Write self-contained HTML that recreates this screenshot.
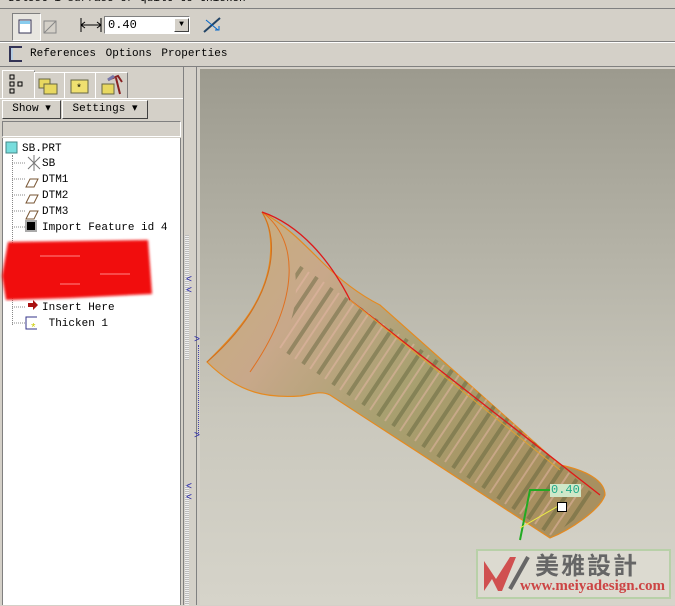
<!DOCTYPE html>
<html><head><meta charset="utf-8">
<style>
body{margin:0;width:675px;height:605px;overflow:hidden;background:#d4d0c8;font-family:"Liberation Mono","Noto Sans CJK SC",monospace;font-size:11px;color:#000;position:relative}
.a{position:absolute}
.btn{background:#d4d0c8;border:1px solid;border-color:#fff #404040 #404040 #fff;box-sizing:border-box;text-align:center;line-height:16px}
.tree div{position:absolute;left:42px;white-space:nowrap}
</style></head><body>
<div class="a" style="left:0;top:0;width:675px;height:8px;background:#d4d0c8;overflow:hidden"><div style="margin-top:-7px;margin-left:8px;font-size:11px;color:#000">Select 1 surface or quilt to thicken</div></div>
<div class="a" style="left:0;top:8px;width:675px;height:1px;background:#808080"></div>
<div class="a" style="left:12px;top:13px;width:27px;height:26px;border:1px solid;border-color:#808080 #fff #fff #808080;background:#e8e6e0"></div>
<svg class="a" style="left:17px;top:18px" width="40" height="18"><rect x="2" y="2" width="12" height="13" fill="#fff" stroke="#335" /><rect x="3" y="3" width="10" height="3" fill="#8ce"/><path d="M27 15 L39 3 M27 15 V3 H39 V15 Z" stroke="#888" fill="none"/></svg>
<svg class="a" style="left:80px;top:17px" width="22" height="16"><path d="M1 1V15M21 1V15M1 8H21M1 8l4-3M1 8l4 3M21 8l-4-3M21 8l-4 3" stroke="#000" fill="none"/></svg>
<div class="a" style="left:104px;top:16px;width:86px;height:18px;background:#fff;border:1px solid;border-color:#808080 #fff #fff #808080;box-sizing:border-box;font-size:12px;line-height:16px;padding-left:3px">0.40</div>
<div class="a btn" style="left:174px;top:18px;width:15px;height:14px;font-size:8px;line-height:12px">▼</div>
<svg class="a" style="left:202px;top:16px" width="20" height="18"><path d="M2 16L18 2" stroke="#246" stroke-width="2"/><path d="M4 4L16 14M13 14h4v-4" stroke="#06c" fill="none"/></svg>
<div class="a" style="left:0;top:41px;width:675px;height:1px;background:#808080"></div>
<div class="a" style="left:0;top:42px;width:675px;height:1px;background:#fff"></div>
<svg class="a" style="left:7px;top:45px" width="18" height="18"><path d="M15 2H3V16H15" stroke="#335" stroke-width="2" fill="none"/><path d="M5 3V15" stroke="#9cf"/></svg>
<div class="a" style="left:30px;top:48px;font-size:11px;word-spacing:3px">References  Options  Properties</div>
<div class="a" style="left:0;top:66px;width:675px;height:1px;background:#808080"></div>
<div class="a" style="left:2px;top:70px;width:31px;height:30px;background:#d4d0c8;border:1px solid;border-color:#fff #808080 transparent #fff"></div>
<svg class="a" style="left:8px;top:74px" width="18" height="20"><rect x="2" y="1" width="4" height="4" fill="none" stroke="#000"/><rect x="2" y="8" width="4" height="4" fill="none" stroke="#000"/><rect x="2" y="15" width="4" height="4" fill="none" stroke="#000"/><rect x="10" y="8" width="4" height="4" fill="none" stroke="#000"/></svg>
<div class="a" style="left:34px;top:72px;width:29px;height:26px;border:1px solid;border-color:#fff #808080 transparent #fff"></div>
<svg class="a" style="left:38px;top:76px" width="22" height="20"><rect x="1" y="3" width="11" height="9" fill="#e8d860" stroke="#664"/><rect x="6" y="8" width="13" height="10" fill="#e8d860" stroke="#664"/></svg>
<div class="a" style="left:64px;top:72px;width:30px;height:26px;border:1px solid;border-color:#fff #808080 transparent #fff"></div>
<svg class="a" style="left:70px;top:77px" width="20" height="17"><rect x="1" y="3" width="17" height="13" fill="#f0e070" stroke="#664"/><text x="6" y="14" font-size="10">*</text></svg>
<div class="a" style="left:95px;top:72px;width:31px;height:26px;border:1px solid;border-color:#fff #808080 transparent #fff"></div>
<svg class="a" style="left:100px;top:74px" width="24" height="22"><rect x="2" y="10" width="12" height="10" fill="#e8d860" stroke="#664"/><path d="M8 6L18 2L22 8M16 4L20 20" stroke="#822" stroke-width="2" fill="none"/><path d="M8 6l6-4" stroke="#77a" stroke-width="3"/></svg>
<div class="a" style="left:0;top:98px;width:183px;height:507px;background:#d4d0c8;border-top:1px solid #fff"></div>
<div class="a btn" style="left:2px;top:100px;width:59px;height:19px;font-size:11px">Show ▾</div>
<div class="a btn" style="left:62px;top:100px;width:86px;height:19px;font-size:11px">Settings ▾</div>
<div class="a" style="left:2px;top:121px;width:179px;height:16px;border:1px solid;border-color:#808080 #fff #fff #808080;background:#d4d0c8;box-sizing:border-box"></div>
<div class="a" style="left:2px;top:138px;width:179px;height:467px;background:#fff;border-left:1px solid #808080;border-right:1px solid #808080;box-sizing:border-box"></div>
<div class="a" style="left:12px;top:155px;height:170px;border-left:1px dotted #888"></div>
<svg class="a" style="left:5px;top:141px" width="14" height="14"><rect x="1" y="1" width="11" height="11" fill="#7dd" stroke="#488"/></svg>
<div class="a" style="left:22px;top:143px">SB.PRT</div>
<div class="tree" style="position:absolute;left:0;top:0">
<div style="top:158px">SB</div><div style="top:174px">DTM1</div><div style="top:190px">DTM2</div><div style="top:206px">DTM3</div><div style="top:222px">Import Feature id 4</div><div style="top:302px">Insert Here</div><div style="top:318px;left:42px">&nbsp;Thicken 1</div>
</div>
<svg class="a" style="left:12px;top:150px" width="30" height="180">
<g stroke="#888" stroke-dasharray="1 1"><path d="M0 13H14M0 29H14M0 45H14M0 61H14M0 77H14M0 157H14M0 173H14"/></g>
<path d="M16 7L28 19M16 19L28 7M22 5V21" stroke="#777"/>
<g fill="none" stroke="#753"><path d="M16 34h8l-4 8h-8z" transform="translate(2 -5)"/><path d="M16 50h8l-4 8h-8z" transform="translate(2 -5)"/><path d="M16 66h8l-4 8h-8z" transform="translate(2 -5)"/></g>
<rect x="13" y="70" width="12" height="12" fill="#aaa"/><rect x="15" y="72" width="8" height="8" fill="#000"/>
<path d="M16 153h5v-3l5 5-5 5v-3h-5z" fill="#a11"/>
<path d="M25 167H14V179H25" stroke="#338" fill="none"/>
</svg>
<svg class="a" style="left:30px;top:322px" width="10" height="10"><text x="0" y="9" font-size="11" fill="#cc0">*</text></svg>
<svg class="a" style="left:0;top:236px" width="160" height="66"><defs><filter id="b"><feGaussianBlur stdDeviation="1.2"/></filter></defs><path d="M8 6 L148 4 L150 30 L152 58 L70 62 L6 64 L2 40 Z" fill="#f10a0a" filter="url(#b)"/><path d="M40 20h40M100 38h30M60 48h20" stroke="#f88" stroke-width="1"/></svg>
<div class="a" style="left:183px;top:67px;width:17px;height:538px;background:#d4d0c8;border-left:1px solid #808080"></div>
<div class="a" style="left:185px;top:235px;width:4px;height:125px;background:repeating-linear-gradient(#bbb 0 1px,#eee 1px 2px)"></div>
<div class="a" style="left:185px;top:485px;width:4px;height:120px;background:repeating-linear-gradient(#bbb 0 1px,#eee 1px 2px)"></div>
<div class="a" style="left:196px;top:67px;width:1px;height:538px;background:#808080"></div>
<div class="a" style="left:186px;top:275px;color:#22a;font-size:10px;line-height:11px">&lt;<br>&lt;</div>
<div class="a" style="left:186px;top:482px;color:#22a;font-size:10px;line-height:11px">&lt;<br>&lt;</div>
<div class="a" style="left:194px;top:335px;color:#22a;font-size:10px">&gt;</div>
<div class="a" style="left:194px;top:431px;color:#22a;font-size:10px">&gt;</div>
<div class="a" style="left:198px;top:345px;height:90px;border-left:1px dotted #44a"></div>
<div class="a" style="left:200px;top:69px;width:475px;height:536px;background:linear-gradient(#9c9a8e,#b5b3a7 35%,#cac8bd 65%,#d6d4ca)"></div>
<svg class="a" style="left:200px;top:69px" width="475" height="536">
<defs>
<linearGradient id="g" x1="0" y1="0" x2="1" y2="0.6"><stop offset="0" stop-color="#c8b07a"/><stop offset=".3" stop-color="#c8a88a"/><stop offset=".6" stop-color="#a8a070"/><stop offset="1" stop-color="#a89060"/></linearGradient>
<clipPath id="c"><path transform="translate(-200 -69)" d="M285 235 C305 280 300 340 250 380 C280 398 310 392 330 395 L550 538 L600 500 L380 305 C340 280 310 250 285 235 Z"/></clipPath>
</defs>
<g transform="translate(-200 -69)">
<path d="M262 212 C285 225 300 240 320 260 C340 280 360 295 380 305 L560 465 C585 470 605 480 605 495 C600 510 570 530 550 538 L330 395 C320 390 310 395 300 396 C270 398 240 395 207 362 C240 330 265 300 270 260 C272 240 270 225 262 212 Z" fill="url(#g)" stroke="#e58a20" stroke-width="1.2"/>
</g>
<g clip-path="url(#c)"><g transform="translate(-200 -69)" stroke="#5a6038" stroke-width="4" opacity=".45" fill="none">
<path d="M258 333l44-66M273 343l44-66M288 354l44-66M303 364l44-66M318 374l44-66M333 385l44-66M348 395l44-66M363 405l44-66M378 416l44-66M393 426l44-66M408 436l44-66M423 447l44-66M438 457l44-66M453 468l44-66M468 478l44-66M483 488l44-66M498 499l44-66M513 509l44-66M528 519l44-66M543 530l44-66M558 540l44-66"/>
</g>
<g transform="translate(-200 -69)" stroke="#e8b8a8" stroke-width="2" opacity=".5" fill="none">
<path d="M265 338l44-66M280 348l44-66M295 359l44-66M310 369l44-66M325 379l44-66M340 390l44-66M355 400l44-66M370 410l44-66M385 421l44-66M400 431l44-66M415 441l44-66M430 452l44-66M445 462l44-66M460 473l44-66M475 483l44-66M490 493l44-66M505 504l44-66M520 514l44-66M535 524l44-66M550 535l44-66"/>
</g></g>
<g transform="translate(-200 -69)">
<path d="M262 212 C280 240 278 300 207 362" stroke="#d07020" fill="none"/>
<path d="M262 212 C300 240 300 300 250 372" stroke="#e07020" fill="none"/>
<path d="M262 212 C300 225 330 260 350 300 L600 495" stroke="#e01818" fill="none" stroke-width="1.3"/>
<path d="M350 300 L560 470" stroke="#e0a030" fill="none"/>
<path d="M520 540 L530 490 H550" stroke="#2a2" fill="none" stroke-width="2"/>
<path d="M520 528 L560 505" stroke="#ee4" fill="none"/>
</g>
</svg>
<div class="a" style="left:550px;top:484px;background:#cfe8c8;color:#2a8;font-size:12px;padding:0 1px;line-height:13px">0.40</div>
<div class="a" style="left:557px;top:502px;width:8px;height:8px;background:#fff;border:1px solid #000"></div>
<div class="a" style="left:476px;top:549px;width:195px;height:50px;border:2px solid #b8d0a8;background:#dcdad0;box-sizing:border-box"></div>
<svg class="a" style="left:480px;top:553px" width="60" height="42"><path d="M4 38V8L16 26L30 4L36 4L22 38L18 38L12 26Z" fill="#d05050"/><path d="M30 36L48 4" stroke="#666" stroke-width="4"/></svg>
<div class="a" style="left:535px;top:550px;font-family:'Noto Sans CJK SC',sans-serif;font-size:24px;font-weight:bold;color:#666;letter-spacing:2px;line-height:28px">美雅設計</div>
<div class="a" style="left:520px;top:578px;font-family:'Liberation Serif',serif;font-size:15px;color:#c44;font-weight:bold">www.meiyadesign.com</div>
</body></html>
